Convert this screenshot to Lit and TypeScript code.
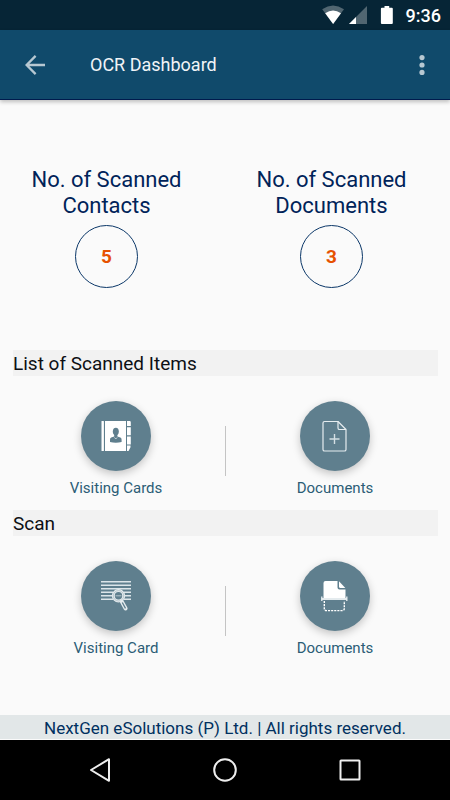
import { LitElement, html, css, svg, type TemplateResult } from "lit";
import { customElement, property } from "lit/decorators.js";

type IconName = "cards" | "document" | "scanCard" | "scanDocument";

const icons: Record<IconName, TemplateResult> = {
  cards: svg`
    <g fill="#fff">
      <rect x="20.5" y="20" width="2.4" height="30" rx="0.6" />
      <path d="M24 20h21v30h-21z" />
      <path d="M46 20h2.600q1.200 0 1.200 1.200v3.800h-3.800zM46 26.200h3.800v8h-3.800zM46 35.400h3.800v8h-3.800zM46 44.600h3.500v1.600l-2 3.800h-1.500z" />
    </g>
    <g fill="#5f7f8e">
      <ellipse cx="34.8" cy="30.6" rx="3" ry="3.8" />
      <path d="M33.200 33h3.200v2.400l3 1.200q1.200.6 1.200 2.200v2.200q-5.800 1.600-11.600 0v-2.200q0-1.600 1.200-2.200l3-1.200z" />
    </g>
    <path d="M33.400 36.400l1.400 1.600 1.400-1.600" fill="none" stroke="#fff" stroke-width=".6" />`,
  document: svg`
    <g fill="none" stroke="#e6edf0" stroke-width="1.2" stroke-linejoin="round">
      <path d="M38 20.500H24.600q-1.600 0-1.600 1.600v26.300q0 1.600 1.600 1.600h19.800q1.600 0 1.600-1.600V28.500z" />
      <path d="M38 20.500v6.400q0 1.600 1.600 1.600h6.400" />
      <path d="M34.500 33v10M29.500 38h10" stroke-width="1.4" stroke="#d4dfe4" />
    </g>`,
  scanCard: svg`
    <path d="M20 20.800h30M20 24.300h30M20 27.800h30M20 31.300h12M43 31.300h7M20 34.800h11M44 34.800h6M20 38.300h12M43 38.300h7"
      stroke="#dce5e9" stroke-width="1.4" />
    <circle cx="37.5" cy="34.8" r="5.2" fill="#5f7f8e" stroke="#e4ebee" stroke-width="3" />
    <circle cx="37.5" cy="34.8" r="5.2" fill="none" stroke="#9db1ba" stroke-width=".6" />
    <path d="M34.500 34.800h6" stroke="#b4c4cb" stroke-width="1" />
    <path d="M40.800 40.600l3.800 6.900" stroke="#e4ebee" stroke-width="4" stroke-linecap="round" />
    <path d="M41.300 41.500l3.200 5.900" stroke="#5f7f8e" stroke-width="1.3" />`,
  scanDocument: svg`
    <path d="M25.500 20h12v6.500q0 2 2 2h6v8.500h-22v-15q0-2 2-2z" fill="#fff" />
    <path d="M39 20.300l6.300 6.700h-4.800q-1.500 0-1.500-1.500z" fill="#fff" />
    <path d="M21.800 35.500v4.500M46.800 35.500v4.500" stroke="#e4ebee" stroke-width="1.4" />
    <path d="M21.500 38h25.500" stroke="#e4ebee" stroke-width="2" />
    <path d="M24.300 40v7.400q0 2.200 2.200 2.200h15.600q2.200 0 2.200-2.200V40" fill="none" stroke="#fff"
      stroke-width="1.4" stroke-dasharray="2.1 1" />`,
};

@customElement("status-bar")
class StatusBar extends LitElement {
  static styles = css`
    :host {
      display: flex;
      align-items: center;
      justify-content: flex-end;
      height: 30px;
      padding-right: 9px;
      background: #062536;
      color: #fff;
      font-size: 18px;
      font-weight: 500;
    }
    .signals {
      margin-right: 12px;
    }
  `;
  render() {
    return html`
      <svg class="signals" width="72" height="20" viewBox="0 0 72 20" aria-hidden="true">
        <path d="M.2 4.200Q11 -3.200 22 4.200L11.100 19z" fill="#516671" />
        <path d="M3.200 8.300Q11 2.800 19 8.300L11.100 19z" fill="#fff" />
        <path d="M45 1v18H27z" fill="#516671" />
        <path d="M34 12v7h-7z" fill="#fff" />
        <path d="M62.500 1h4.700v1.700h2.600q1 0 1 1v14.200q0 1-1 1h-9.900q-1 0-1-1V3.700q0-1 1-1h2.600z" fill="#fff" />
      </svg>
      <time>9:36</time>
    `;
  }
}

@customElement("count-stat")
class CountStat extends LitElement {
  @property() label = "";
  @property({ type: Number }) count = 0;

  static styles = css`
    :host {
      display: flex;
      flex-direction: column;
      align-items: center;
      gap: 6px;
    }
    .label {
      margin: 0;
      max-width: 170px;
      font-size: 22px;
      font-weight: 400;
      line-height: 26px;
      text-align: center;
      color: #002359;
    }
    .count {
      box-sizing: border-box;
      display: grid;
      place-items: center;
      width: 63px;
      height: 63px;
      border: 1px solid #0b3768;
      border-radius: 50%;
      font-size: 19px;
      font-weight: 700;
      color: #e65100;
    }
  `;
  render() {
    return html`
      <h2 class="label">${this.label}</h2>
      <div class="count">${this.count}</div>
    `;
  }
}

@customElement("action-tile")
class ActionTile extends LitElement {
  @property() icon: IconName = "cards";
  @property() label = "";

  static styles = css`
    :host {
      display: flex;
      justify-content: center;
    }
    .tile {
      display: flex;
      flex-direction: column;
      align-items: center;
      gap: 4px;
      padding: 0;
      border: 0;
      background: none;
      font: inherit;
      font-size: 15px;
      line-height: 26px;
      color: #2b5d76;
      cursor: pointer;
    }
    .disc {
      width: 70px;
      height: 70px;
      border-radius: 50%;
      background: #5f7f8e;
      box-shadow: 0 3px 8px rgba(0, 0, 0, 0.22);
    }
  `;
  render() {
    return html`
      <button class="tile" type="button">
        <svg class="disc" viewBox="0 0 70 70" aria-hidden="true">${icons[this.icon]}</svg>
        <span>${this.label}</span>
      </button>
    `;
  }
}

@customElement("tile-section")
class TileSection extends LitElement {
  @property() heading = "";
  @property({ attribute: false }) tiles: { icon: IconName; label: string }[] = [];

  static styles = css`
    .heading {
      margin: 0;
      padding-top: 2px;
      background: #f2f2f2;
      font-size: 19px;
      font-weight: 400;
      line-height: 24px;
      color: #0c0f14;
    }
    .tiles {
      display: grid;
      grid-template-columns: 1fr 1px 1fr;
      gap: 6px;
      align-items: center;
      padding: 25px 0 9px;
    }
    .divider {
      height: 50px;
      background: #c4c4c4;
    }
  `;
  render() {
    const [first, second] = this.tiles;
    return html`
      <h2 class="heading">${this.heading}</h2>
      <div class="tiles">
        <action-tile icon=${first.icon} label=${first.label}></action-tile>
        <div class="divider"></div>
        <action-tile icon=${second.icon} label=${second.label}></action-tile>
      </div>
    `;
  }
}

@customElement("app-root")
class AppRoot extends LitElement {
  private listed = [
    { icon: "cards" as IconName, label: "Visiting Cards" },
    { icon: "document" as IconName, label: "Documents" },
  ];
  private scans = [
    { icon: "scanCard" as IconName, label: "Visiting Card" },
    { icon: "scanDocument" as IconName, label: "Documents" },
  ];

  static styles = css`
    :host {
      display: flex;
      flex-direction: column;
      min-height: 100vh;
      background: #fafafa;
      font-family: Roboto, sans-serif;
    }
    button {
      display: grid;
      place-items: center;
      padding: 0;
      border: 0;
      background: none;
      cursor: pointer;
    }
    svg {
      display: block;
    }
    .bar {
      display: flex;
      align-items: center;
      box-sizing: border-box;
      height: 70px;
      padding: 0 10px;
      border-bottom: 1px solid #001b4d;
      background: #104a6b;
      box-shadow: 0 2px 4px rgba(0, 0, 0, 0.24);
    }
    .tool {
      width: 50px;
      height: 50px;
    }
    .more {
      width: 36px;
    }
    .title {
      flex: 1;
      margin: 0 0 0 30px;
      font-size: 18px;
      font-weight: 400;
      color: #f0f4f7;
    }
    .content {
      flex: 1;
      padding: 67px 0 0;
    }
    .stats {
      display: grid;
      grid-template-columns: 1fr 1fr;
      gap: 12px;
      padding: 0 12px 62px 0;
    }
    .sections {
      padding: 0 12px 0 13px;
    }
    .footer {
      padding-top: 2px;
      border-bottom: 1px solid #fafafa;
      background: #e2e7e8;
      font-size: 17px;
      line-height: 22px;
      text-align: center;
      color: #003060;
    }
    .nav {
      display: flex;
      justify-content: center;
      gap: 75px;
      padding: 5px 0;
      background: #000;
    }
  `;

  render() {
    return html`
      <status-bar></status-bar>
      <header class="bar">
        <button class="tool" type="button" aria-label="Back">
          <svg width="20" height="20" viewBox="0 0 20 20" fill="none" stroke="#b7c8d2" stroke-width="2.3">
            <path d="M20 10H2M10.600 .9L1.600 10l9 9.100" />
          </svg>
        </button>
        <h1 class="title">OCR Dashboard</h1>
        <button class="tool more" type="button" aria-label="More options">
          <svg width="6" height="20" viewBox="0 0 6 20" fill="#b7c8d2">
            <circle cx="3" cy="2.6" r="2.6" />
            <circle cx="3" cy="10" r="2.6" />
            <circle cx="3" cy="17.4" r="2.6" />
          </svg>
        </button>
      </header>
      <main class="content">
        <div class="stats">
          <count-stat label="No. of Scanned Contacts" count="5"></count-stat>
          <count-stat label="No. of Scanned Documents" count="3"></count-stat>
        </div>
        <div class="sections">
          <tile-section heading="List of Scanned Items" .tiles=${this.listed}></tile-section>
          <tile-section heading="Scan" .tiles=${this.scans}></tile-section>
        </div>
      </main>
      <footer class="footer">NextGen eSolutions (P) Ltd. | All rights reserved.</footer>
      <nav class="nav" aria-label="System">
        <button class="tool" type="button" aria-label="System back">
          <svg width="24" height="24" viewBox="0 0 24 24" fill="none" stroke="#eee" stroke-width="2" stroke-linejoin="round">
            <path d="M21 1.200v21.600L3 12z" />
          </svg>
        </button>
        <button class="tool" type="button" aria-label="Home">
          <svg width="24" height="24" viewBox="0 0 24 24" fill="none" stroke="#eee" stroke-width="2">
            <circle cx="12" cy="12" r="10.8" />
          </svg>
        </button>
        <button class="tool" type="button" aria-label="Recent apps">
          <svg width="24" height="24" viewBox="0 0 24 24" fill="none" stroke="#eee" stroke-width="2">
            <rect x="2.5" y="2.5" width="19" height="19" rx=".5" />
          </svg>
        </button>
      </nav>
    `;
  }
}
